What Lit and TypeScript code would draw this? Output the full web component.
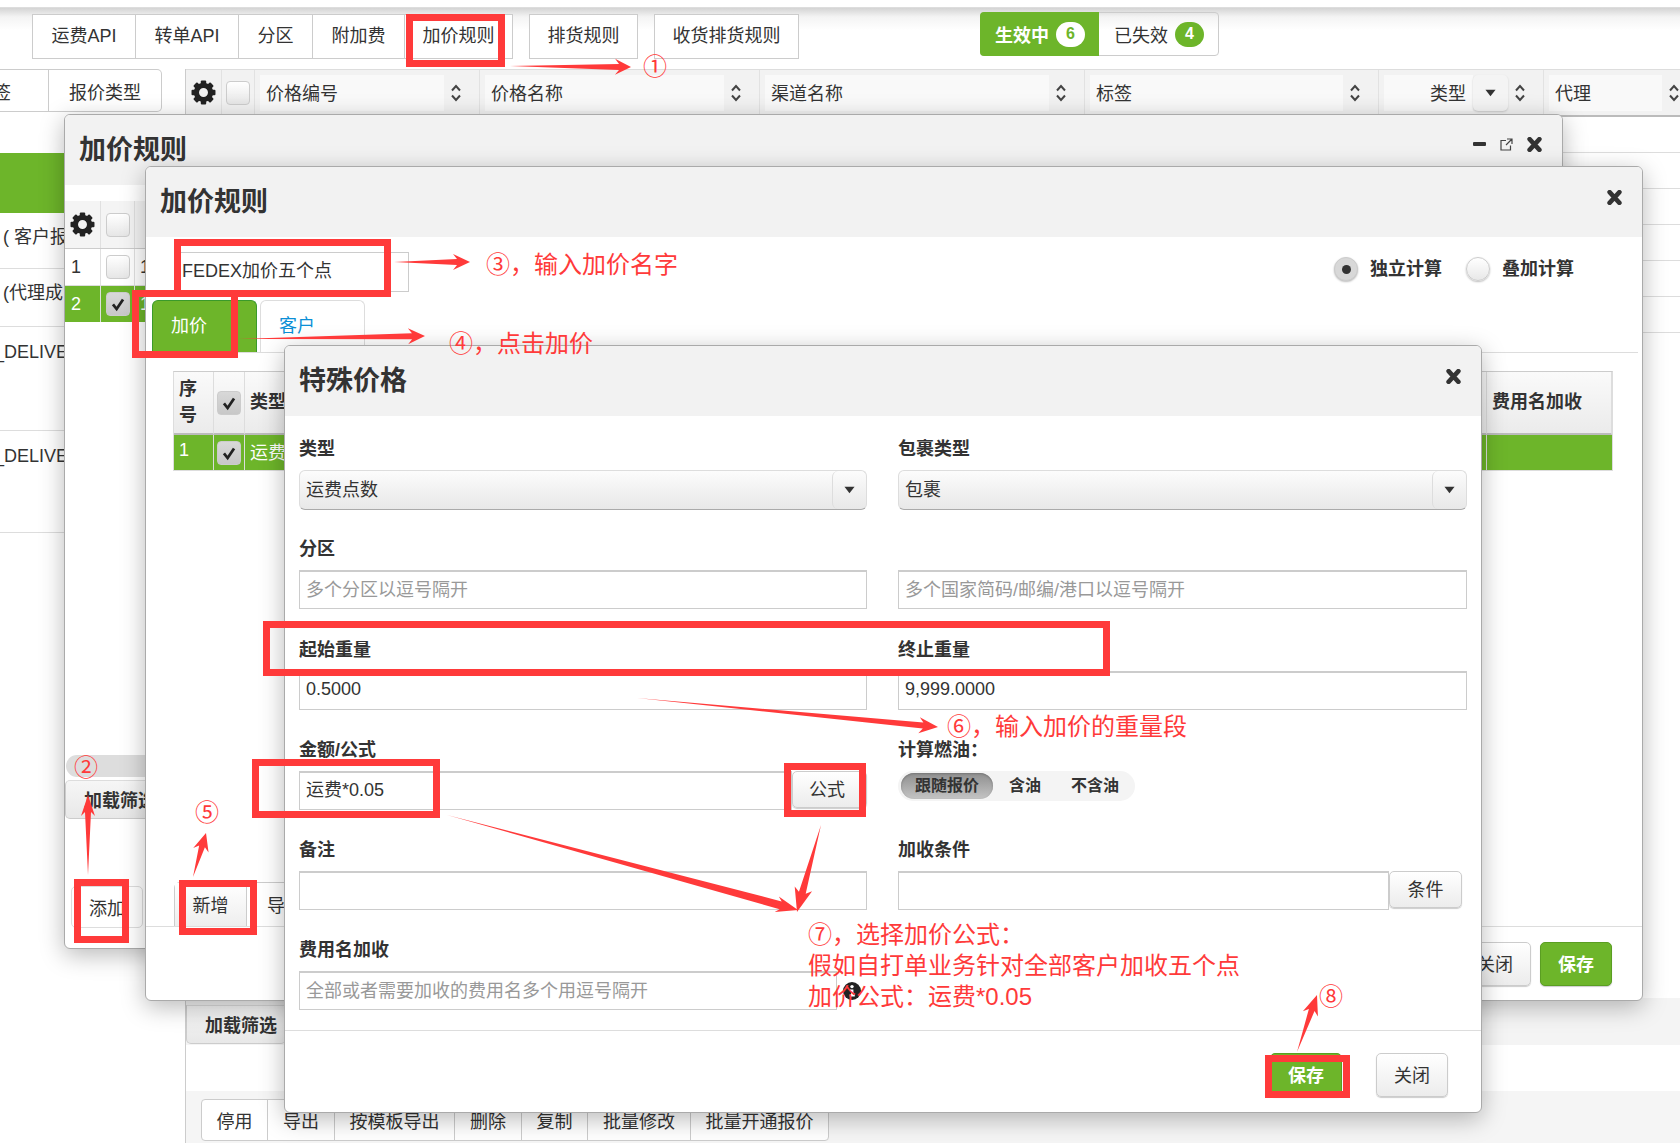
import { LitElement, html, svg, css, unsafeCSS } from 'lit';
import { customElement } from 'lit/decorators.js';

const RED = '#ff3a3a';

const headCols = [
  { label: '价格编号', w: 225 },
  { label: '价格名称', w: 280 },
  { label: '渠道名称', w: 325 },
  { label: '标签', w: 294 },
];

const topTabs = [
  { label: '运费API', w: 103 },
  { label: '转单API', w: 103 },
  { label: '分区', w: 74 },
  { label: '附加费', w: 92 },
  { label: '加价规则', w: 107 },
];

const bottomBtns = [
  { label: '停用', w: 66 },
  { label: '导出', w: 67 },
  { label: '按模板导出', w: 120 },
  { label: '删除', w: 67 },
  { label: '复制', w: 66 },
  { label: '批量修改', w: 103 },
  { label: '批量开通报价', w: 137 },
];

// red frames drawn on top of the screenshot: x, y, w, h
const frames = [
  [406, 14, 99, 53],
  [174, 239, 217, 58],
  [132, 290, 106, 68],
  [74, 879, 55, 64],
  [179, 880, 78, 55],
  [263, 621, 847, 55],
  [252, 759, 188, 59],
  [784, 763, 82, 54],
  [1265, 1055, 85, 43],
];

// x1, y1, x2, y2, head length, head half width, neck half width
const arrows = [
  [510, 66, 631, 67, 16, 8, 3],
  [394, 262, 470, 262, 17, 8, 3],
  [239, 339, 425, 336, 17, 8, 3],
  [88, 875, 88, 795, 21, 7, 3],
  [193, 877, 206, 833, 18, 8, 3],
  [637, 698, 938, 727, 19, 8, 3],
  [447, 815, 798, 910, 22, 8, 4],
  [821, 825, 797, 912, 24, 9, 3.5],
  [1297, 1052, 1317, 995, 20, 8, 3],
];

const notes = [
  { x: 643, y: 67, text: '①' },
  { x: 74, y: 768, text: '②' },
  { x: 486, y: 265, text: '③，输入加价名字' },
  { x: 449, y: 344, text: '④，点击加价' },
  { x: 195, y: 813, text: '⑤' },
  { x: 947, y: 727, text: '⑥，输入加价的重量段' },
  { x: 808, y: 935, text: '⑦，选择加价公式：' },
  { x: 808, y: 966, text: '假如自打单业务针对全部客户加收五个点' },
  { x: 808, y: 997, text: '加价公式：运费*0.05' },
  { x: 1319, y: 997, text: '⑧' },
];

const gear = () => html`<svg class="gear" viewBox="0 0 24 24">
  ${[0, 45, 90, 135, 180, 225, 270, 315].map(
    (a) => svg`<rect x="9.4" y="0.5" width="5.2" height="6" rx="1" fill="#222" transform="rotate(${a} 12 12)"></rect>`,
  )}
  <circle cx="12" cy="12" r="6.8" fill="none" stroke="#222" stroke-width="5"></circle>
</svg>`;

const sort = () => html`<svg class="sort" viewBox="0 0 12 20">
  <path d="M2 7.5 L6 3 L10 7.5 M2 12.5 L6 17 L10 12.5" fill="none" stroke="#444" stroke-width="2"></path>
</svg>`;

const caret = () => html`<svg class="caret" viewBox="0 0 12 8"><path d="M0.5 0.5 H11.5 L6 7.5 Z" fill="#333"></path></svg>`;

const cross = () => html`<svg class="cross" viewBox="0 0 14 14">
  <path d="M2.4 2 L11.6 12 M11.6 2 L2.4 12" stroke="#333" stroke-width="4.2" stroke-linecap="round"></path>
</svg>`;

const check = (on = false) => html`<span class="check ${on ? 'marked' : ''}">
  ${on ? html`<svg viewBox="0 0 24 24"><path d="M6.5 12.5 L10.5 17.5 L17.5 7" fill="none" stroke="#222" stroke-width="3"></path></svg>` : ''}
</span>`;

@customElement('app-root')
export class AppRoot extends LitElement {
  static styles = css`
    :host {
      display: block;
      font-family: "Liberation Sans", "Noto Sans CJK SC", sans-serif;
      font-size: 18px;
      color: #333;
    }
    .page {
      position: relative;
      width: 1680px;
      height: 1143px;
      overflow: hidden;
      background: #fff;
      display: flex;
      flex-direction: column;
    }
    .top {
      flex: none;
      display: flex;
      align-items: flex-start;
      padding-left: 32px;
      box-sizing: border-box;
      border-top: 1px solid #ddd;
      margin-top: 7px;
      height: 62px;
      background: linear-gradient(#d4d4d4, #f4f4f4 9px, #fff 22px);
    }
    .tabs {
      display: flex;
      height: 45px;
      margin-top: 6px;
      box-sizing: border-box;
      border: 1px solid #ccc;
      background: #fff;
    }
    .tabs.solo {
      margin-left: 16px;
    }
    .tabs span {
      display: flex;
      align-items: center;
      justify-content: center;
      box-sizing: border-box;
      padding-bottom: 5px;
      border-right: 1px solid #ccc;
    }
    .tabs span:last-child {
      border-right: 0;
    }
    .status {
      display: flex;
      height: 44px;
      width: 239px;
      margin: 4px 0 0 181px;
      box-sizing: border-box;
      border: 1px solid #ccc;
      border-radius: 4px;
    }
    .status div {
      display: flex;
      align-items: center;
      gap: 7px;
      padding-left: 15px;
    }
    .status .on {
      width: 119px;
      margin: -1px 0 -1px -1px;
      background: #6db52a;
      color: #fff;
      font-weight: 700;
      border-radius: 4px 0 0 4px;
      box-sizing: border-box;
    }
    .status .off {
      flex: 1;
    }
    .badge {
      display: inline-flex;
      align-items: center;
      justify-content: center;
      width: 29px;
      height: 25px;
      border-radius: 13px;
      font-size: 16px;
      font-weight: 700;
    }
    .on .badge {
      background: #fff;
      color: #6db52a;
    }
    .off .badge {
      background: #6db52a;
      color: #fff;
    }
    .layout {
      flex: 1;
      display: grid;
      grid-template-columns: 185px 1fr;
    }
    .side-tabs {
      display: flex;
      width: 162px;
      height: 43px;
      overflow: hidden;
      box-sizing: border-box;
      border: 1px solid #ccc;
      border-left: 0;
      border-radius: 0 5px 5px 0;
    }
    .side-tabs span {
      display: flex;
      align-items: center;
      justify-content: center;
      box-sizing: border-box;
    }
    .side-tabs .clip {
      width: 49px;
      border-right: 1px solid #ccc;
      justify-content: flex-end;
      padding-right: 37px;
    }
    .side-tabs .type {
      flex: 1;
    }
    .side-green {
      height: 60px;
      margin-top: 41px;
      background: #6db52a;
    }
    .side-row {
      box-sizing: border-box;
      padding: 12px 0 0 3px;
      border-bottom: 1px solid #ddd;
      line-height: 24px;
      white-space: nowrap;
    }
    .side-row.long {
      padding: 13px 0 0 0;
      text-indent: -6px;
    }
    .main {
      display: flex;
      flex-direction: column;
      border-left: 1px solid #ccc;
      box-sizing: border-box;
      min-width: 0;
    }
    .head {
      display: flex;
      height: 48px;
      flex: none;
      background: #f2f2f2;
      border-top: 1px solid #ddd;
      border-bottom: 2px solid #bbb;
      box-sizing: border-box;
    }
    .hcell {
      display: flex;
      align-items: center;
      box-sizing: border-box;
      padding: 5px 17px 4px 5px;
      border-right: 1px solid #e2e2e2;
      flex: none;
    }
    .hcell.icon {
      justify-content: center;
      padding: 0;
    }
    .hcell .inner {
      flex: 1;
      align-self: stretch;
      display: flex;
      align-items: center;
      padding: 0 0 2px 6px;
      background: #f9f9f9;
    }
    .hcell .inner.right {
      justify-content: flex-end;
      padding-right: 7px;
    }
    .sort {
      width: 12px;
      height: 20px;
      margin-left: 6px;
      flex: none;
    }
    .drop {
      width: 35px;
      align-self: stretch;
      display: flex;
      align-items: center;
      justify-content: center;
      background: #f4f4f4;
      border-radius: 5px;
      box-shadow: 0 1px 2px #ccc;
      flex: none;
    }
    .gear {
      width: 25px;
      height: 25px;
    }
    .check {
      display: inline-flex;
      width: 24px;
      height: 24px;
      box-sizing: border-box;
      border: 1px solid #ccc;
      border-radius: 4px;
      background: linear-gradient(#fff, #e6e6e6);
      flex: none;
    }
    .check.marked {
      background: linear-gradient(#d8d8d8, #c8c8c8);
    }
    .check svg {
      width: 100%;
      height: 100%;
    }
    .caret {
      width: 11px;
      height: 8px;
    }
    .rows div {
      height: 36px;
      box-sizing: border-box;
      border-bottom: 1px solid #ddd;
    }
    .spacer {
      flex: 1;
    }
    .strip {
      height: 47px;
      flex: none;
      background: #f4f4f4;
      display: flex;
      align-items: flex-end;
      padding-bottom: 1px;
      box-sizing: border-box;
    }
    .load {
      display: flex;
      align-items: center;
      padding: 0 0 2px 18px;
      width: 100px;
      height: 39px;
      font-weight: 700;
      white-space: nowrap;
      background: linear-gradient(#f6f6f6, #e8e8e8);
      border: 1px solid #ccc;
      border-top-color: #ddd;
      border-radius: 0 0 5px 5px;
      box-sizing: border-box;
    }
    .tools {
      height: 52px;
      margin-top: 46px;
      flex: none;
      background: #f5f5f5;
      padding: 8px 0 0 15px;
      box-sizing: border-box;
      display: flex;
    }
    .tools .group {
      display: flex;
      height: 42px;
      box-sizing: border-box;
      border: 1px solid #ccc;
      border-radius: 4px;
      background: #fff;
    }
    .tools .group span {
      display: flex;
      align-items: center;
      justify-content: center;
      box-sizing: border-box;
      border-right: 1px solid #ccc;
    }
    .tools .group span:last-child {
      border-right: 0;
    }

    /* windows */
    .win {
      position: absolute;
      box-sizing: border-box;
      background: #fff;
      border: 1px solid #aaa;
      border-radius: 6px;
      box-shadow: 0 6px 24px rgba(0, 0, 0, 0.28);
      display: flex;
      flex-direction: column;
      overflow: hidden;
    }
    .win.one {
      left: 64px;
      top: 114px;
      width: 1499px;
      height: 835px;
    }
    .win.two {
      left: 145px;
      top: 166px;
      width: 1498px;
      height: 835px;
    }
    .win.three {
      left: 284px;
      top: 345px;
      width: 1198px;
      height: 768px;
    }
    .win-head {
      flex: none;
      height: 70px;
      background: #f2f2f2;
      display: flex;
      align-items: center;
      justify-content: space-between;
      padding: 0 20px 0 14px;
      box-sizing: border-box;
    }
    .win-head h2 {
      margin: 0;
      font-size: 27px;
      font-weight: 700;
      line-height: 36px;
      color: #333;
    }
    .win-head .ctrl {
      display: flex;
      align-items: center;
      gap: 14px;
      margin-top: -12px;
    }
    .win.two .win-head .ctrl,
    .win.three .win-head .ctrl {
      margin-top: -10px;
    }
    .cross {
      width: 15px;
      height: 15px;
      display: block;
    }
    .ctrl .min {
      width: 13px;
      height: 4px;
      background: #333;
      border-radius: 1px;
    }
    .ctrl .pop {
      width: 13px;
      height: 13px;
      display: block;
    }
    .one-head {
      display: flex;
      height: 48px;
      margin-top: 16px;
      flex: none;
      border-bottom: 1px solid #ccc;
      background: #f4f4f4;
      box-sizing: border-box;
    }
    .one-head > div {
      display: flex;
      align-items: center;
      justify-content: center;
      border-right: 1px solid #e0e0e0;
      box-sizing: border-box;
    }
    .cw-a {
      width: 36px;
      flex: none;
    }
    .cw-b {
      width: 34px;
      flex: none;
    }
    .one-row {
      display: flex;
      height: 37px;
      flex: none;
      border-bottom: 1px solid #ddd;
      box-sizing: border-box;
    }
    .one-row.green {
      height: 36px;
      background: #6db52a;
      color: #fff;
      border-bottom: 0;
    }
    .one-row > div {
      display: flex;
      align-items: center;
      justify-content: center;
      border-right: 1px solid #e0e0e0;
      box-sizing: border-box;
    }
    .one-row .num {
      justify-content: flex-start;
      padding-left: 6px;
    }
    .one-row .code {
      padding-left: 5px;
    }
    .scroll {
      flex: none;
      height: 22px;
      width: 90px;
      margin: 0 0 3px 1px;
      border-radius: 11px;
      background: #ddd;
    }
    .load.small {
      flex: none;
      border-radius: 5px;
      margin-bottom: 67px;
    }
    .add {
      flex: none;
      width: 72px;
      height: 42px;
      margin: 0 0 20px 6px;
      display: flex;
      align-items: center;
      justify-content: center;
      border: 1px solid #ddd;
      border-radius: 5px;
      box-sizing: border-box;
    }
    .name-row {
      flex: none;
      height: 63px;
      display: flex;
      justify-content: space-between;
      padding: 15px 68px 0 28px;
      box-sizing: border-box;
    }
    .name {
      width: 235px;
      height: 40px;
      box-sizing: border-box;
      border: 1px solid #ccc;
      padding: 0 0 6px 7px;
      display: flex;
      align-items: center;
    }
    .radios {
      display: flex;
      align-items: center;
      gap: 12px;
      height: 34px;
      font-weight: 700;
      color: #333;
    }
    .radios span {
      padding-bottom: 5px;
    }
    .radios i {
      width: 24px;
      height: 24px;
      box-sizing: border-box;
      border: 1px solid #ccc;
      border-radius: 50%;
      background: linear-gradient(#fff, #e8e8e8);
      box-shadow: 0 1px 2px #bbb;
      display: flex;
      align-items: center;
      justify-content: center;
    }
    .radios i.on {
      background: #d8d8d8;
    }
    .radios i.on::after {
      content: "";
      width: 9px;
      height: 9px;
      border-radius: 50%;
      background: #333;
    }
    .radios span + i {
      margin-left: 12px;
    }
    .win-tabs {
      flex: none;
      height: 53px;
      margin: 0 4px 0 6px;
      border-bottom: 1px solid #ddd;
      display: flex;
      gap: 3px;
      box-sizing: border-box;
    }
    .win-tabs span {
      width: 105px;
      display: flex;
      align-items: center;
      padding: 0 0 5px 18px;
      border: 1px solid #ddd;
      border-bottom: 0;
      border-radius: 6px 6px 0 0;
      box-sizing: border-box;
      color: #0b8fd6;
    }
    .win-tabs .active {
      background: #6db52a;
      border-color: #3a9a2a;
      color: #fff;
    }
    .grid-table {
      flex: none;
      margin: 18px 29px 0 27px;
      display: grid;
      grid-template-columns: 40px 31px 1fr 125px;
      grid-template-rows: 63px 35px;
      border: 1px solid #ddd;
      border-top-color: #ccc;
    }
    .grid-table > div {
      display: flex;
      align-items: center;
      box-sizing: border-box;
      border-right: 1px solid #ddd;
    }
    .grid-table .th {
      font-weight: 700;
      background: linear-gradient(#fafafa, #ebebeb);
      border-bottom: 2px solid #bbb;
      padding: 0 0 2px 5px;
      line-height: 26px;
    }
    .grid-table .td {
      background: #6db52a;
      color: #fff;
      padding: 0 0 4px 5px;
    }
    .grid-table .th.mark,
    .grid-table .td.mark {
      padding: 0 0 0 3px;
    }
    .grid-table .th:last-of-type,
    .grid-table .td:last-of-type {
      border-right: 0;
    }
    .two-tools {
      flex: none;
      display: flex;
      height: 44px;
      margin-left: 28px;
      width: 130px;
      border: 1px solid #ccc;
      border-bottom: 0;
      border-radius: 6px 0 0 0;
      box-sizing: border-box;
    }
    .two-tools span {
      display: flex;
      align-items: center;
      justify-content: center;
      width: 72px;
      flex: none;
      padding-bottom: 2px;
      border-right: 1px solid #ccc;
      box-sizing: border-box;
      background: linear-gradient(#fff, #eee);
    }
    .two-tools span + span {
      width: 58px;
      border: 0;
      background: none;
    }
    .foot {
      flex: none;
      border-top: 1px solid #ddd;
      display: flex;
      justify-content: flex-end;
      box-sizing: border-box;
    }
    .win.two .foot {
      height: 74px;
      padding: 15px 30px 0 0;
      gap: 9px;
    }
    .win.three .foot {
      height: 82px;
      padding: 22px 33px 0 0;
      gap: 34px;
    }
    .btn {
      display: flex;
      align-items: center;
      justify-content: center;
      padding-bottom: 3px;
      width: 72px;
      height: 44px;
      box-sizing: border-box;
      border: 1px solid #ccc;
      border-radius: 5px;
      background: linear-gradient(#fff, #ececec);
      box-shadow: 0 1px 1px #ccc;
      color: #333;
    }
    .btn.save {
      background: #6db52a;
      border-color: #5a9e22;
      color: #fff;
      font-weight: 700;
    }
    .form {
      flex: 1;
      min-height: 0;
      display: grid;
      grid-template-columns: 568px 569px;
      column-gap: 31px;
      grid-auto-rows: 100.3px;
      padding: 21px 0 0 14px;
      box-sizing: border-box;
    }
    .label {
      height: 24px;
      line-height: 24px;
      font-weight: 700;
      margin-bottom: 9px;
    }
    .field {
      height: 39px;
      box-sizing: border-box;
      border: 1px solid #ccc;
      border-top-width: 2px;
      padding: 0 0 5px 6px;
      display: flex;
      align-items: center;
      background: #fff;
    }
    .field.ph {
      color: #999;
    }
    .field.num {
      padding-bottom: 3px;
    }
    .select {
      height: 40px;
      border: 1px solid #ddd;
      border-bottom: 1px solid #aaa;
      border-radius: 6px;
      padding: 0 0 0 6px;
      background: linear-gradient(#fcfcfc, #e8e8e8);
      justify-content: space-between;
    }
    .select em {
      font-style: normal;
      padding-bottom: 5px;
    }
    .select b {
      width: 33px;
      height: 38px;
      border-left: 1px solid #ddd;
      border-radius: 6px;
      display: flex;
      align-items: center;
      justify-content: center;
    }
    .with-btn {
      display: flex;
      align-items: flex-start;
    }
    .with-btn .field {
      flex: 1;
    }
    .with-btn .btn {
      height: 37px;
      width: 74px;
      flex: none;
    }
    .with-btn .btn.formula {
      width: 75px;
      padding-right: 5px;
    }
    .with-btn .btn.cond {
      width: 73px;
      margin-right: 5px;
    }
    .fuel {
      display: flex;
      align-items: center;
      width: 237px;
      height: 30px;
      border-radius: 15px;
      background: #f4f4f4;
      font-size: 16px;
      font-weight: 700;
      padding-left: 3px;
      box-sizing: border-box;
      margin-top: 2px;
    }
    .fuel span {
      line-height: 24px;
    }
    .fuel .cur {
      width: 92px;
      height: 26px;
      border-radius: 13px;
      background: linear-gradient(#8f8f8f, #c4c4c4);
      box-shadow: inset 0 1px 2px #777;
      display: flex;
      align-items: center;
      justify-content: center;
      margin-right: 16px;
    }
    .fuel .plain + .plain {
      margin-left: 30px;
    }
    .info-wrap {
      display: flex;
      align-items: center;
      gap: 6px;
      margin-right: 6px;
    }
    .info-wrap .field {
      width: 538px;
      flex: none;
    }
    .info {
      width: 18px;
      height: 18px;
      flex: none;
      position: relative;
    }

    /* annotations sit over everything */
    .frame {
      position: absolute;
      box-sizing: border-box;
      border: 7px solid ${unsafeCSS(RED)};
    }
    .overlay {
      position: absolute;
      left: 0;
      top: 0;
      width: 1680px;
      height: 1143px;
      pointer-events: none;
    }
    .note {
      position: absolute;
      font-size: 24px;
      line-height: 32px;
      color: ${unsafeCSS(RED)};
      white-space: nowrap;
    }
  `;

  private arrow(a: number[]) {
    const [x1, y1, x2, y2, len, wide, neck] = a;
    const d = Math.hypot(x2 - x1, y2 - y1);
    const ux = (x2 - x1) / d;
    const uy = (y2 - y1) / d;
    const bx = x2 - ux * len;
    const by = y2 - uy * len;
    const nx = x2 - ux * (len - 4);
    const ny = y2 - uy * (len - 4);
    const pts = [
      [x1, y1],
      [nx - uy * neck, ny + ux * neck],
      [bx - uy * wide, by + ux * wide],
      [x2, y2],
      [bx + uy * wide, by - ux * wide],
      [nx + uy * neck, ny - ux * neck],
    ];
    return svg`<polygon points=${pts.map((p) => p.join(',')).join(' ')} fill=${RED}></polygon>`;
  }

  private renderBackground() {
    return html`
      <div class="top">
        <div class="tabs">
          ${topTabs.map((t) => html`<span style="width:${t.w}px">${t.label}</span>`)}
        </div>
        <div class="tabs solo"><span style="width:107px">排货规则</span></div>
        <div class="tabs solo"><span style="width:143px">收货排货规则</span></div>
        <div class="status">
          <div class="on">生效中<span class="badge">6</span></div>
          <div class="off">已失效<span class="badge">4</span></div>
        </div>
      </div>
      <div class="layout">
        <div class="side">
          <div class="side-tabs">
            <span class="clip">签</span>
            <span class="type">报价类型</span>
          </div>
          <div class="side-green"></div>
          <div class="side-row" style="height:56px">( 客户报</div>
          <div class="side-row" style="height:58px">(代理成</div>
          <div class="side-row long" style="height:104px">_DELIVE</div>
          <div class="side-row long" style="height:102px">_DELIVE</div>
        </div>
        <div class="main">
          <div class="head">
            <div class="hcell icon" style="width:36px">${gear()}</div>
            <div class="hcell icon" style="width:33px">${check()}</div>
            ${headCols.map(
              (c) => html`<div class="hcell" style="width:${c.w}px">
                <div class="inner">${c.label}</div>
                ${sort()}
              </div>`,
            )}
            <div class="hcell" style="width:165px">
              <div class="inner right">类型</div>
              <div class="drop">${caret()}</div>
              ${sort()}
            </div>
            <div class="hcell" style="width:136px;padding-right:0;border:0">
              <div class="inner">代理</div>
              ${sort()}
            </div>
          </div>
          <div class="rows">
            ${[0, 1, 2, 3, 4, 5].map(() => html`<div></div>`)}
          </div>
          <div class="spacer"></div>
          <div class="strip"><div class="load">加载筛选</div></div>
          <div class="tools">
            <div class="group">
              ${bottomBtns.map((b) => html`<span style="width:${b.w}px">${b.label}</span>`)}
            </div>
          </div>
        </div>
      </div>
    `;
  }

  private renderWindowOne() {
    return html`
      <div class="win one">
        <div class="win-head">
          <h2>加价规则</h2>
          <div class="ctrl">
            <span class="min"></span>
            <svg class="pop" viewBox="0 0 13 13">
              <path d="M6 2.5 H1 V12 H10.5 V7.5 M7 1 H12 V6 M12 1 L6 7" fill="none" stroke="#444" stroke-width="1.2"></path>
            </svg>
            ${cross()}
          </div>
        </div>
        <div class="one-head">
          <div class="cw-a">${gear()}</div>
          <div class="cw-b">${check()}</div>
        </div>
        <div class="one-row">
          <div class="cw-a num">1</div>
          <div class="cw-b">${check()}</div>
          <div class="code">1</div>
        </div>
        <div class="one-row green">
          <div class="cw-a num">2</div>
          <div class="cw-b">${check(true)}</div>
          <div class="code">1</div>
        </div>
        <div class="spacer"></div>
        <div class="scroll"></div>
        <div class="load small">加载筛选</div>
        <div class="add">添加</div>
      </div>
    `;
  }

  private renderWindowTwo() {
    return html`
      <div class="win two">
        <div class="win-head">
          <h2>加价规则</h2>
          <div class="ctrl">${cross()}</div>
        </div>
        <div class="name-row">
          <div class="name">FEDEX加价五个点</div>
          <div class="radios">
            <i class="on"></i><span>独立计算</span>
            <i></i><span>叠加计算</span>
          </div>
        </div>
        <div class="win-tabs">
          <span class="active">加价</span>
          <span>客户</span>
        </div>
        <div class="grid-table">
          <div class="th">序<br />号</div>
          <div class="th mark">${check(true)}</div>
          <div class="th">类型</div>
          <div class="th">费用名加收</div>
          <div class="td">1</div>
          <div class="td mark">${check(true)}</div>
          <div class="td">运费</div>
          <div class="td"></div>
        </div>
        <div class="spacer"></div>
        <div class="two-tools"><span>新增</span><span>导</span></div>
        <div class="foot">
          <div class="btn">关闭</div>
          <div class="btn save">保存</div>
        </div>
      </div>
    `;
  }

  private renderWindowThree() {
    return html`
      <div class="win three">
        <div class="win-head">
          <h2>特殊价格</h2>
          <div class="ctrl">${cross()}</div>
        </div>
        <div class="form">
          <div>
            <div class="label">类型</div>
            <div class="field select"><em>运费点数</em><b>${caret()}</b></div>
          </div>
          <div>
            <div class="label">包裹类型</div>
            <div class="field select"><em>包裹</em><b>${caret()}</b></div>
          </div>
          <div>
            <div class="label">分区</div>
            <div class="field ph">多个分区以逗号隔开</div>
          </div>
          <div>
            <div class="label"></div>
            <div class="field ph">多个国家简码/邮编/港口以逗号隔开</div>
          </div>
          <div>
            <div class="label">起始重量</div>
            <div class="field num">0.5000</div>
          </div>
          <div>
            <div class="label">终止重量</div>
            <div class="field num">9,999.0000</div>
          </div>
          <div>
            <div class="label">金额/公式</div>
            <div class="with-btn">
              <div class="field">运费*0.05</div>
              <div class="btn formula">公式</div>
            </div>
          </div>
          <div>
            <div class="label">计算燃油：</div>
            <div class="fuel">
              <span class="cur">跟随报价</span>
              <span class="plain">含油</span>
              <span class="plain">不含油</span>
            </div>
          </div>
          <div>
            <div class="label">备注</div>
            <div class="field"></div>
          </div>
          <div>
            <div class="label">加收条件</div>
            <div class="with-btn">
              <div class="field"></div>
              <div class="btn cond">条件</div>
            </div>
          </div>
          <div>
            <div class="label">费用名加收</div>
            <div class="info-wrap">
              <div class="field ph">全部或者需要加收的费用名多个用逗号隔开</div>
              <svg class="info" viewBox="0 0 18 18">
                <circle cx="9" cy="9" r="9" fill="#222"></circle>
                <circle cx="9" cy="4.6" r="1.7" fill="#fff"></circle>
                <path d="M6.8 7.5 H10.4 V12.6 H11.8 V14.4 H6.6 V12.6 H8 V9.3 H6.8 Z" fill="#fff"></path>
              </svg>
            </div>
          </div>
        </div>
        <div class="foot">
          <div class="btn save">保存</div>
          <div class="btn">关闭</div>
        </div>
      </div>
    `;
  }

  render() {
    return html`
      <div class="page">
        ${this.renderBackground()} ${this.renderWindowOne()} ${this.renderWindowTwo()} ${this.renderWindowThree()}
        ${frames.map(
          (f) => html`<div class="frame" style="left:${f[0]}px;top:${f[1]}px;width:${f[2]}px;height:${f[3]}px"></div>`,
        )}
        <svg class="overlay" viewBox="0 0 1680 1143">${arrows.map((a) => this.arrow(a))}</svg>
        ${notes.map((n) => html`<div class="note" style="left:${n.x}px;top:${n.y - 16}px">${n.text}</div>`)}
      </div>
    `;
  }
}
